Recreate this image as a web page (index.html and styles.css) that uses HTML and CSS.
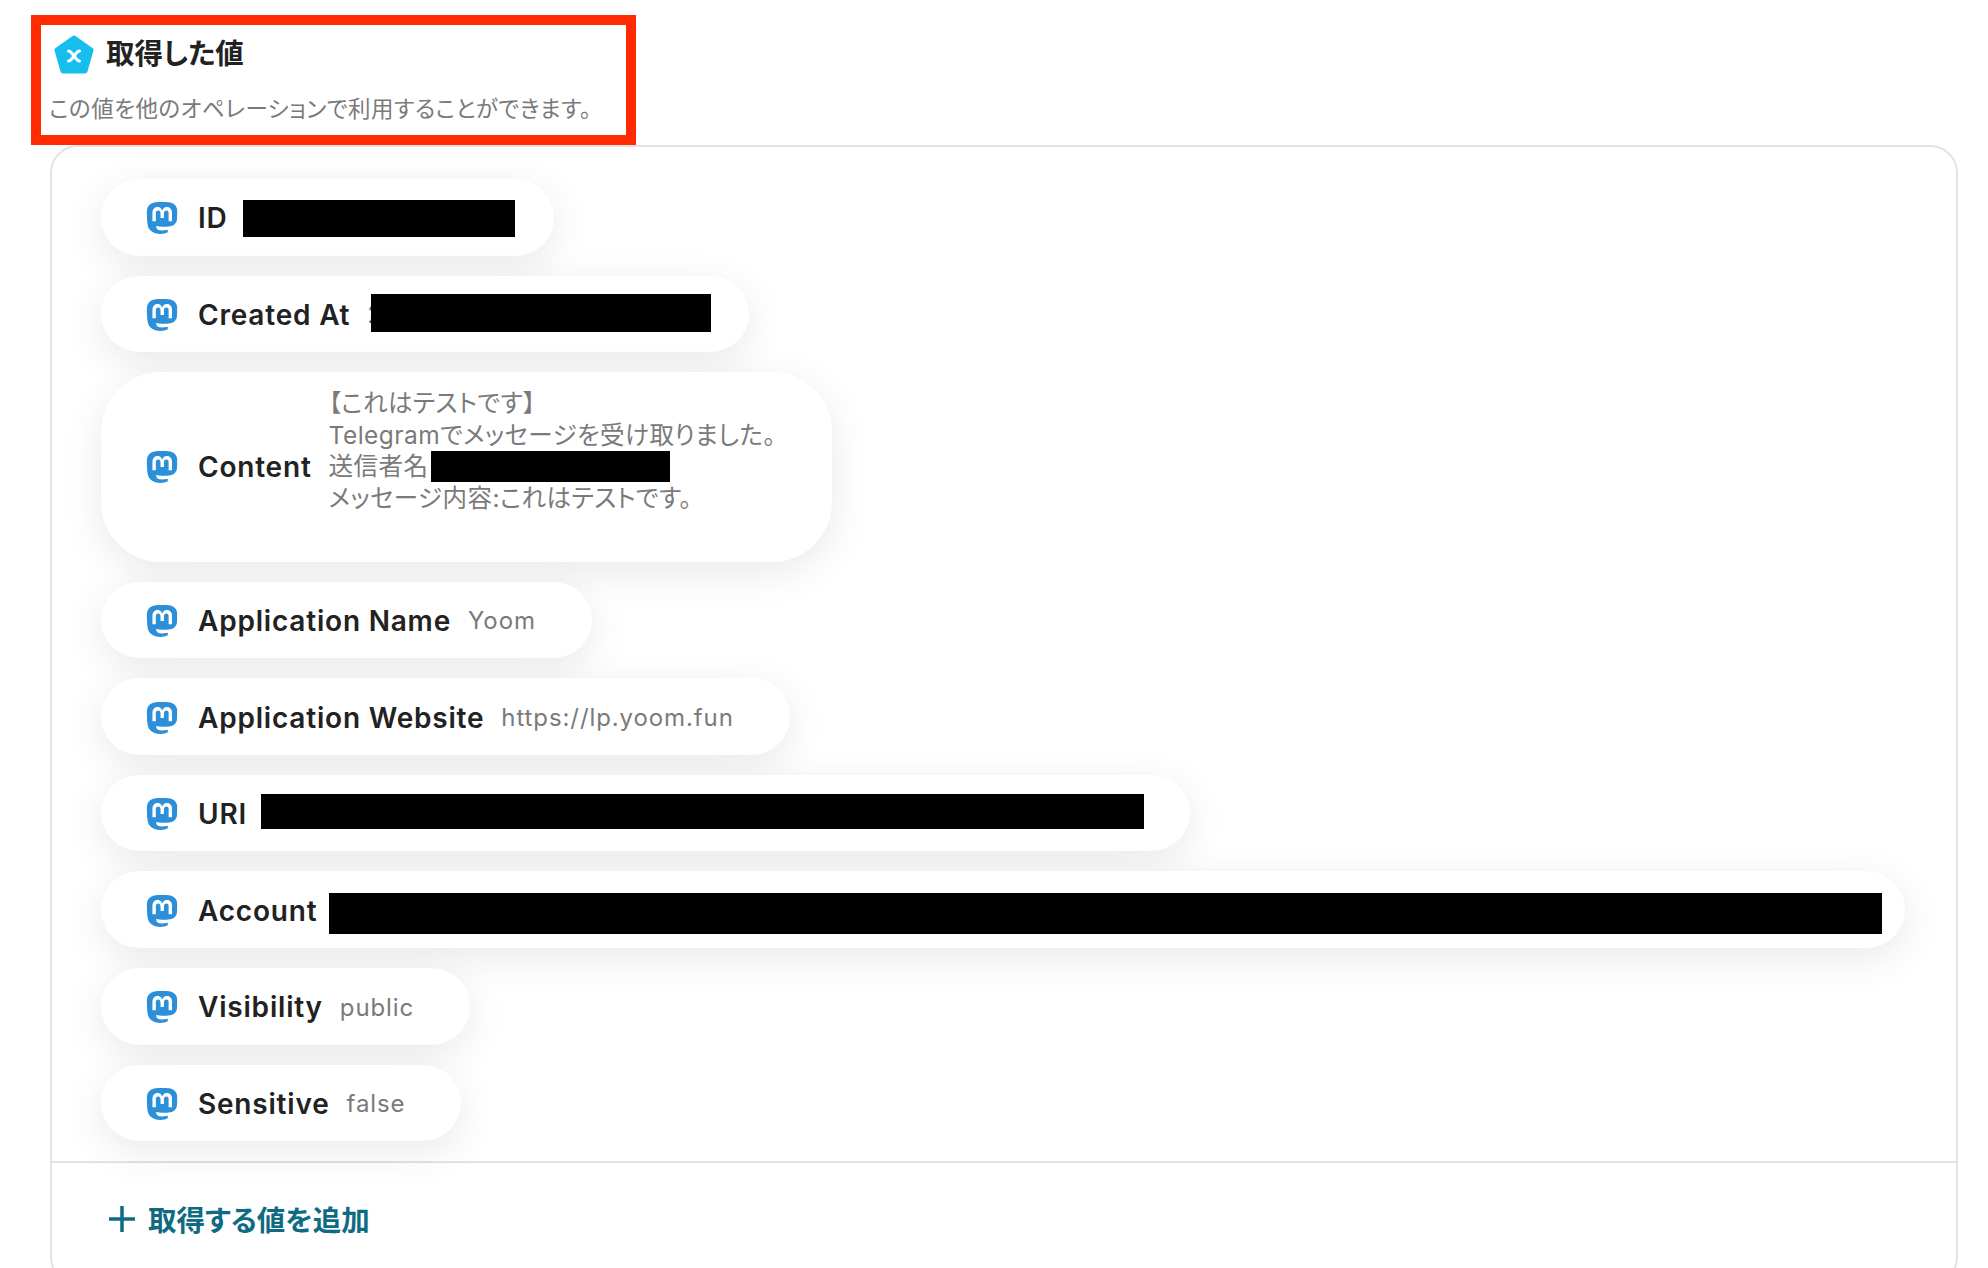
FILE: index.html
```html
<!DOCTYPE html>

<html lang="ja">
    <head>
        <title>取得した値</title>
        <link rel="stylesheet" href="styles.css">
    </head>
    <body>
        <svg class="defs" width="0" height="0">
            <symbol id="mastodon" viewBox="0 0 24 24">
                <path d="M23.268 5.313c-.35-2.578-2.617-4.61-5.304-5.004C17.51.242 15.792 0 11.813 0h-.03c-3.98 0-4.835.242-5.288.309C3.882.692 1.496 2.518.917 5.127.64 6.412.61 7.837.661 9.143c.074 1.874.088 3.745.26 5.611.118 1.24.325 2.47.62 3.68.55 2.237 2.777 4.098 4.96 4.857 2.336.792 4.849.923 7.256.38.265-.061.527-.132.786-.213.585-.184 1.27-.39 1.774-.753a.057.057 0 0 0 .023-.043v-1.809a.052.052 0 0 0-.02-.041.053.053 0 0 0-.046-.01 20.282 20.282 0 0 1-4.709.545c-2.73 0-3.463-1.284-3.674-1.818a5.593 5.593 0 0 1-.319-1.433.053.053 0 0 1 .066-.054c1.517.363 3.072.546 4.632.546.376 0 .75 0 1.125-.01 1.57-.044 3.224-.124 4.768-.422.038-.008.077-.015.11-.024 2.435-.464 4.753-1.92 4.989-5.604.008-.145.03-1.52.03-1.67.002-.512.167-3.63-.024-5.545zm-3.748 9.195h-2.561V8.29c0-1.309-.55-1.976-1.67-1.976-1.23 0-1.846.79-1.846 2.35v3.403h-2.546V8.663c0-1.56-.617-2.35-1.848-2.35-1.112 0-1.668.668-1.67 1.977v6.218H4.822V8.102c0-1.31.337-2.35 1.011-3.12.696-.77 1.608-1.164 2.74-1.164 1.311 0 2.302.5 2.962 1.498l.638 1.06.638-1.06c.66-.999 1.65-1.498 2.96-1.498 1.13 0 2.043.395 2.74 1.164.675.77 1.012 1.81 1.012 3.12z"/>
            </symbol>
        </svg>

        <div class="heading-box">
            <div class="heading-title">
                <svg class="heading-icon" viewBox="0 0 40 40">
                    <path class="heading-shape" d="M20 3 L37 15 L31 36 L9 36 L3 15 Z"/>
                    <path class="heading-mark" d="M14.5 16 C17 16 18 18.5 20 21 C22 23.5 23 26 25.5 26 M25.5 16 C23 16 22 18.5 20 21 C18 23.5 17 26 14.5 26"/>
                </svg>
                <h2>取得した値</h2>
            </div>
            <p>この値を他のオペレーションで利用することができます。</p>
        </div>

        <div class="panel">
            <div class="pill-list">
                <div class="pill">
                    <svg class="pill-icon"><use href="#mastodon"/></svg>
                    <span class="pill-label">ID</span>
                    <span class="redact redact-id"></span>
                </div>
                <div class="pill">
                    <svg class="pill-icon"><use href="#mastodon"/></svg>
                    <span class="pill-label">Created At</span>
                    <span class="pill-value">2</span>
                    <span class="redact redact-created"></span>
                </div>
                <div class="pill pill-tall">
                    <svg class="pill-icon"><use href="#mastodon"/></svg>
                    <span class="pill-label">Content</span>
                    <div class="pill-value pill-text">
                        <div>【これはテストです】</div>
                        <div>Telegramでメッセージを受け取りました。</div>
                        <div>送信者名 <span class="redact redact-sender"></span></div>
                        <div>メッセージ内容:これはテストです。</div>
                        <div>&nbsp;</div>
                    </div>
                </div>
                <div class="pill">
                    <svg class="pill-icon"><use href="#mastodon"/></svg>
                    <span class="pill-label">Application Name</span>
                    <span class="pill-value">Yoom</span>
                </div>
                <div class="pill">
                    <svg class="pill-icon"><use href="#mastodon"/></svg>
                    <span class="pill-label">Application Website</span>
                    <span class="pill-value">https://lp.yoom.fun</span>
                </div>
                <div class="pill">
                    <svg class="pill-icon"><use href="#mastodon"/></svg>
                    <span class="pill-label">URI</span>
                    <span class="redact redact-uri"></span>
                </div>
                <div class="pill">
                    <svg class="pill-icon"><use href="#mastodon"/></svg>
                    <span class="pill-label">Account</span>
                    <span class="redact redact-account"></span>
                </div>
                <div class="pill">
                    <svg class="pill-icon"><use href="#mastodon"/></svg>
                    <span class="pill-label">Visibility</span>
                    <span class="pill-value">public</span>
                </div>
                <div class="pill">
                    <svg class="pill-icon"><use href="#mastodon"/></svg>
                    <span class="pill-label">Sensitive</span>
                    <span class="pill-value">false</span>
                </div>
            </div>
            <div class="add-row">
                <svg class="add-icon" viewBox="0 0 26 26">
                    <path d="M13 0 V26 M0 13 H26"/>
                </svg>
                <span>取得する値を追加</span>
            </div>
        </div>
    </body>
</html>
```

FILE: styles.css
```css
html, body {
  height: 100%;
}

body {
  margin: 0;
  padding: 15px 0 0;
  box-sizing: border-box;
  overflow: hidden;
  background: #fff;
  font-family: Inter, "Noto Sans CJK JP", sans-serif;
}

.defs {
  position: absolute;
}

.heading-box {
  width: 605px;
  height: 130px;
  margin-left: 31px;
  padding: 7px 0 0 8px;
  box-sizing: border-box;
  border: 10px solid #ff2a00;
}

.heading-title {
  display: flex;
  align-items: center;
  gap: 12px;
  margin-left: 5px;
}

.heading-icon {
  width: 40px;
  height: 40px;
  flex: none;
  margin-top: 3px;
}

.heading-shape {
  fill: #17bdec;
  stroke: #17bdec;
  stroke-width: 5;
  stroke-linejoin: round;
}

.heading-mark {
  fill: none;
  stroke: #fff;
  stroke-width: 3;
  stroke-linecap: round;
}

.heading-box h2 {
  margin: 0;
  font-size: 28.5px;
  font-weight: 700;
  line-height: 40px;
  color: #222;
  font-feature-settings: "palt";
}

.heading-box p {
  margin: 18px 0 0;
  font-size: 22.5px;
  line-height: 32px;
  letter-spacing: 0.5px;
  color: #7a7a7a;
  font-feature-settings: "palt";
}

.panel {
  width: 1908px;
  height: 1140px;
  margin-left: 50px;
  box-sizing: border-box;
  border: 2px solid #e3e3e3;
  border-radius: 28px;
}

.pill-list {
  display: flex;
  flex-direction: column;
  align-items: flex-start;
  gap: 20px;
  height: 1016px;
  padding: 32px 0 0 49px;
  box-sizing: border-box;
  border-bottom: 2px solid #e3e3e3;
}

.pill {
  display: flex;
  align-items: center;
  min-height: 76.6px;
  padding: 2px 56px 0 45px;
  box-sizing: border-box;
  background: #fff;
  border-radius: 39px;
  box-shadow: 0 10px 40px rgba(0, 0, 0, 0.09);
}

.pill-tall {
  border-radius: 60px;
  padding-top: 16px;
  padding-bottom: 16px;
}

.pill-icon {
  width: 32px;
  height: 32px;
  flex: none;
  margin-right: 20px;
  fill: #2b90d9;
}

.pill-label {
  font-size: 28px;
  font-weight: 600;
  letter-spacing: 0.8px;
  color: #222;
  white-space: nowrap;
}

.pill-value {
  margin-left: 17px;
  font-size: 24px;
  line-height: 31.5px;
  letter-spacing: 0.9px;
  color: #7a7a7a;
  white-space: nowrap;
}

.pill-text {
  letter-spacing: 0.45px;
  font-size: 24.5px;
  font-feature-settings: "palt";
}

.redact {
  display: block;
  background: #000;
}

.redact-id {
  width: 272px;
  height: 37px;
  margin: 0 -17px 0 15px;
}

.redact-created {
  width: 340px;
  height: 38px;
  margin: -4px -18px 0 -12px;
}

.redact-sender {
  display: inline-block;
  width: 239px;
  height: 31px;
  margin-left: -5px;
  vertical-align: top;
}

.redact-uri {
  width: 883px;
  height: 35px;
  margin: -6px -10px 0 14px;
}

.redact-account {
  width: 1553px;
  height: 41px;
  margin: 6px -33px 0 12px;
}

.add-row {
  display: flex;
  align-items: center;
  gap: 13px;
  padding: 35px 0 0 57px;
  font-size: 28.5px;
  font-weight: 700;
  color: #0f6b82;
  font-feature-settings: "palt";
}

.add-icon {
  width: 26px;
  height: 26px;
  flex: none;
}

.add-icon path {
  fill: none;
  stroke: #0f6b82;
  stroke-width: 3.5;
}
```
